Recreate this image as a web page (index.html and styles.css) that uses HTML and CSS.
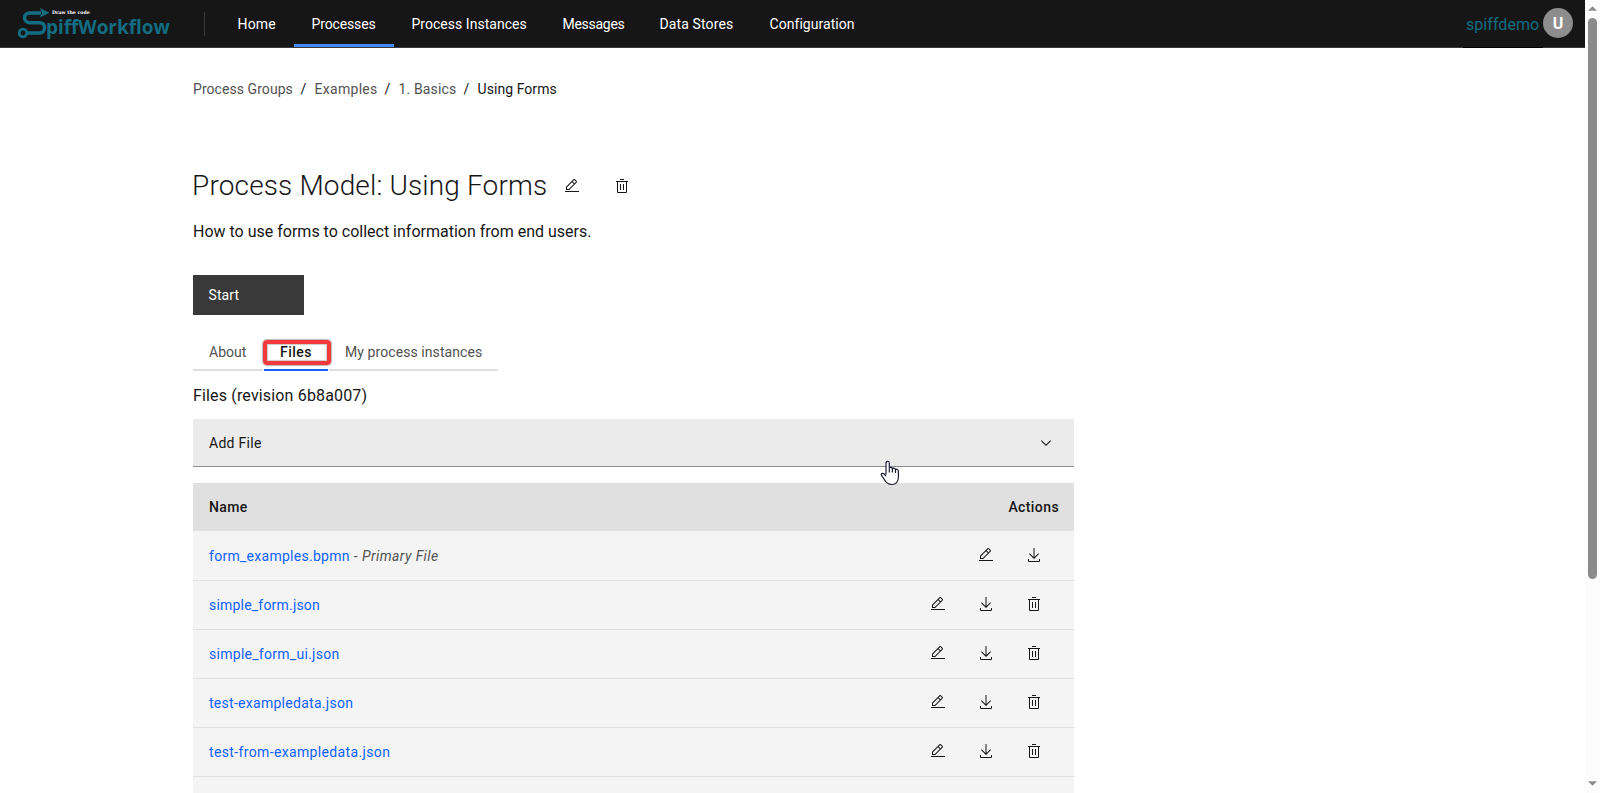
FILE: index.html
```html
<!DOCTYPE html>
<html lang="en">
<head>
<meta charset="utf-8">
<title>Process Model: Using Forms</title>
<link rel="stylesheet" href="styles.css">
</head>
<body>
<svg class="sprite" aria-hidden="true">
  <symbol id="edit" viewBox="0 0 32 32"><path d="M2 26H30V28H2zM25.4 9c.8-.8.8-2 0-2.8l-3.6-3.6c-.8-.8-2-.8-2.8 0l-15 15V24h6.4L25.4 9zM20.4 4L24 7.6l-3 3L17.4 7 20.4 4zM6 22v-3.6l10-10 3.6 3.6-10 10H6z"/></symbol>
  <symbol id="trash" viewBox="0 0 32 32"><path d="M12 12H14V24H12zM18 12H20V24H18zM4 6V8H6V28a2 2 0 002 2H24a2 2 0 002-2V8h2V6zM8 28V8H24V28zM12 2H20V4H12z"/></symbol>
  <symbol id="download" viewBox="0 0 32 32"><path d="M26 24v4H6V24H4v4a2 2 0 002 2H26a2 2 0 002-2V24zM26 14L24.59 12.59 17 20.17V2H15V20.17L7.41 12.59 6 14 16 24z"/></symbol>
</svg>
<div class="viewport">
  <div class="page">
    <header class="header">
      <a class="brand">
        <svg class="brand-mark" viewBox="0 0 34 34"><path d="M23 6H12C8.500 6 6.500 8 6.500 10.500S8.500 15.700 12 15.700H21.500C25 15.700 26.500 18 26.500 20.700S25 26 21.500 26H9.500" /><circle cx="5" cy="26" r="3.800"/><path class="tip" d="M22 1L31.500 5.700 22 10.500 24 5.700z"/></svg>
        <span class="brand-words"><span class="brand-tag">Draw the code</span><span class="brand-name">piffWorkflow</span></span>
      </a>
      <span class="divider"></span>
      <nav class="nav">
        <a class="nav-item nav-home">Home</a>
        <a class="nav-item nav-processes active">Processes</a>
        <a class="nav-item nav-instances">Process Instances</a>
        <a class="nav-item nav-messages">Messages</a>
        <a class="nav-item nav-stores">Data Stores</a>
        <a class="nav-item nav-config">Configuration</a>
      </nav>
      <div class="user"><span class="user-name">spiffdemo</span><span class="avatar">U</span></div>
    </header>
    <main class="main">
      <nav class="crumbs">
        <span class="crumb-groups">Process Groups</span><i>/</i><span class="crumb-examples">Examples</span><i>/</i><span class="crumb-basics">1. Basics</span><i>/</i><b>Using Forms</b>
      </nav>
      <div class="title-row">
        <h1>Process Model: Using Forms</h1>
        <svg class="icon"><use href="#edit"/></svg>
        <svg class="icon"><use href="#trash"/></svg>
      </div>
      <p class="description">How to use forms to collect information from end users.</p>
      <button class="start">Start</button>
      <div class="tabs">
        <a class="tab tab-about">About</a>
        <a class="tab tab-files selected">Files<span class="highlight"></span></a>
        <a class="tab tab-mine">My process instances</a>
      </div>
      <p class="revision">Files (revision 6b8a007)</p>
      <div class="dropdown"><span>Add File</span><svg class="icon" viewBox="0 0 16 16"><path d="M8 11L3 6 3.7 5.3 8 9.600 12.300 5.300 13 6z"/></svg></div>
      <div class="table">
        <div class="row head"><span class="name-head">Name</span><span class="actions-head">Actions</span></div>
        <div class="row first"><span class="file"><a class="link">form_examples.bpmn</a><span class="primary"> - <em>Primary File</em></span></span><span class="actions"><svg class="icon"><use href="#edit"/></svg><svg class="icon"><use href="#download"/></svg></span></div>
        <div class="row"><a class="link link-form">simple_form.json</a><span class="actions"><svg class="icon"><use href="#edit"/></svg><svg class="icon"><use href="#download"/></svg><svg class="icon"><use href="#trash"/></svg></span></div>
        <div class="row"><a class="link">simple_form_ui.json</a><span class="actions"><svg class="icon"><use href="#edit"/></svg><svg class="icon"><use href="#download"/></svg><svg class="icon"><use href="#trash"/></svg></span></div>
        <div class="row"><a class="link">test-exampledata.json</a><span class="actions"><svg class="icon"><use href="#edit"/></svg><svg class="icon"><use href="#download"/></svg><svg class="icon"><use href="#trash"/></svg></span></div>
        <div class="row"><a class="link link-from">test-from-exampledata.json</a><span class="actions"><svg class="icon"><use href="#edit"/></svg><svg class="icon"><use href="#download"/></svg><svg class="icon"><use href="#trash"/></svg></span></div>
        <div class="row"></div>
      </div>
    </main>
    <svg class="cursor" viewBox="0 0 20 26"><path d="M6 14.500V3.200C6 .6 9.300.6 9.300 3.200V8.500C9.500 7 12.200 7 12.400 9 12.800 7.600 15.300 7.800 15.500 9.800 16 8.700 18.400 9 18.400 11.200V17C18.400 21.800 15.800 24.500 11.800 24.500 7.500 24.500 5.800 22.500 4 19L1.400 15.200C.6 13.600 2.800 12.700 4 13.800L6 16"/><path d="M9.300 8.500V12.500M12.400 9V12.500M15.500 9.800V13"/></svg>
  </div>
  <div class="scrollbar">
    <svg class="arrow" viewBox="0 0 10 5"><path d="M5 0L10 5H0z"/></svg>
    <span class="thumb"></span>
    <svg class="arrow down" viewBox="0 0 10 5"><path d="M0 0H10L5 5z"/></svg>
  </div>
</div>
</body>
</html>
```
FILE: styles.css
```css
* { box-sizing: border-box; }
body { margin: 0; background: #fff; color: #161616; font: 14px/20px Roboto, "Liberation Sans", sans-serif; overflow: hidden; }
h1, p { margin: 0; font-weight: 400; }
.sprite { display: none; }
.viewport { display: flex; height: 793px; overflow: hidden; }
.page { position: relative; flex: 1; min-width: 0; }
.icon { width: 16px; height: 16px; fill: currentColor; flex: none; display: block; }

/* Header */
.header { display: flex; height: 48px; background: #161616; border-bottom: 1px solid #393939; color: #fff; white-space: nowrap; }
.brand { display: flex; width: 204px; padding: 7px 0 0 18px; color: #126d82; flex: none; }
.brand-mark { width: 34px; height: 34px; flex: none; fill: none; stroke: currentColor; stroke-width: 3.5; }
.brand-mark circle { stroke-width: 2.800; }
.brand-mark .tip { fill: currentColor; stroke: none; }
.brand-words { display: flex; flex-direction: column; margin-left: -6px; }
.brand-tag { margin: 3px 0 0 6px; height: 6px; font: 900 4.7px/6px "DejaVu Serif", serif; color: #fff; }
.brand-name { margin-top: -1px; font: 700 19px/24px "Open Sans", sans-serif; letter-spacing: -.05px; }
.divider { width: 1px; height: 24px; margin-top: 12px; background: #393939; }
.nav { display: flex; margin-left: 15px; }
.nav-item { height: 47px; padding: 14px 0 0 17.5px; }
.nav-home { width: 74px; letter-spacing: .2px; }
.nav-processes { width: 100px; letter-spacing: -.13px; }
.nav-instances { width: 151px; letter-spacing: .03px; }
.nav-messages { width: 97px; letter-spacing: -.28px; }
.nav-stores { width: 110px; letter-spacing: .12px; }
.nav-config { width: 121px; letter-spacing: .05px; }
.active { border-bottom: 3px solid #4589ff; }
.user { display: flex; margin: 0 12px 0 auto; }
.user-name { height: 48px; width: 80px; padding: 15px 0 0 3px; border-bottom: 1px solid #000; color: #126d82; font-size: 16px; letter-spacing: .05px; }
.avatar { width: 30px; height: 30px; margin-top: 8px; border-radius: 50%; background: #8d8d8d; text-align: center; font-weight: 700; font-size: 16px; line-height: 31px; }

/* Page body */
.main { width: 1074px; padding: 31px 0 0 193px; white-space: nowrap; }
.crumbs { display: flex; color: #525252; letter-spacing: .06px; }
.crumbs i { width: 22px; text-align: center; font-style: normal; color: #161616; }
.crumbs b { font-weight: 400; color: #161616; }
.crumb-groups { width: 99.5px; }
.crumb-examples { width: 62px; letter-spacing: .3px; }
.crumb-basics { width: 57px; letter-spacing: .15px; }
.title-row { display: flex; align-items: center; height: 36px; margin-top: 68px; }
.title-row h1 { width: 371px; margin: 1px 0 0 -1px; font-size: 28px; font-weight: 300; line-height: 36px; letter-spacing: .15px; }
.title-row .icon { margin: 2px 34px 0 0; }
.title-row .icon:first-of-type { margin-left: 1px; }
.description { margin-top: 17px; font-size: 16px; line-height: 23px; }
.start { display: block; width: 111px; height: 40px; margin-top: 32px; padding: 0 0 0 15.5px; border: 0; background: #393939; color: #fff; font: inherit; text-align: left; letter-spacing: .1px; }
.tabs { display: flex; gap: 1px; margin-top: 16px; }
.tab { height: 40px; padding: 11px 0 0 16px; border-bottom: 2px solid #e0e0e0; color: #525252; }
.tab-about { width: 70px; }
.tab-files { position: relative; width: 64px; letter-spacing: .5px; }
.tab-mine { width: 169px; letter-spacing: .08px; }
.selected { border-color: #0f62fe; color: #161616; font-weight: 500; }
.highlight { position: absolute; left: -1px; top: 9px; width: 68px; height: 25px; border: 4px solid #f23a3c; border-radius: 4px; box-shadow: 0 0 1px 1px rgba(80, 80, 80, .4), inset 0 0 1px 1px rgba(80, 80, 80, .3); }
.revision { margin-top: 13px; font-size: 16px; line-height: 23px; letter-spacing: .16px; }
.dropdown { display: flex; justify-content: space-between; align-items: center; height: 48px; margin-top: 12px; padding: 0 20px 0 16px; background: #ebebeb; border-bottom: 1px solid #8d8d8d; letter-spacing: .29px; }
.dropdown span { margin-top: 1px; }

/* File table */
.table { margin-top: 16px; background: #f4f4f4; }
.row { display: flex; justify-content: space-between; align-items: center; height: 49px; padding: 0 16px; border-bottom: 1px solid #e0e0e0; }
.first { height: 50px; }
.file { margin-top: 1px; }
.head { height: 48px; border: 0; background: #e0e0e0; font-weight: 500; letter-spacing: .4px; }
.actions-head { margin-right: -1px; }
.link { color: #0f62fe; letter-spacing: .28px; }
.link-form { letter-spacing: .2px; }
.link-from { letter-spacing: .36px; }
.primary { color: #525252; letter-spacing: .42px; }
.actions { display: flex; gap: 32px; padding-right: 16px; margin-top: -2px; }

/* Pointer lies over the page */
.cursor { position: absolute; left: 880px; top: 460px; width: 20px; height: 26px; fill: #fff; stroke: #1b1b33; stroke-width: 1.200; }

.scrollbar { display: flex; flex-direction: column; align-items: center; width: 15px; padding: 6px 1px 7px 1px; background: #fcfcfc; }
.arrow { width: 9px; height: 5px; fill: #8b8b8b; }
.thumb { width: 9px; height: 561px; margin-top: 7px; border-radius: 5px; background: #8b8b8b; }
.down { margin-top: auto; }
```
